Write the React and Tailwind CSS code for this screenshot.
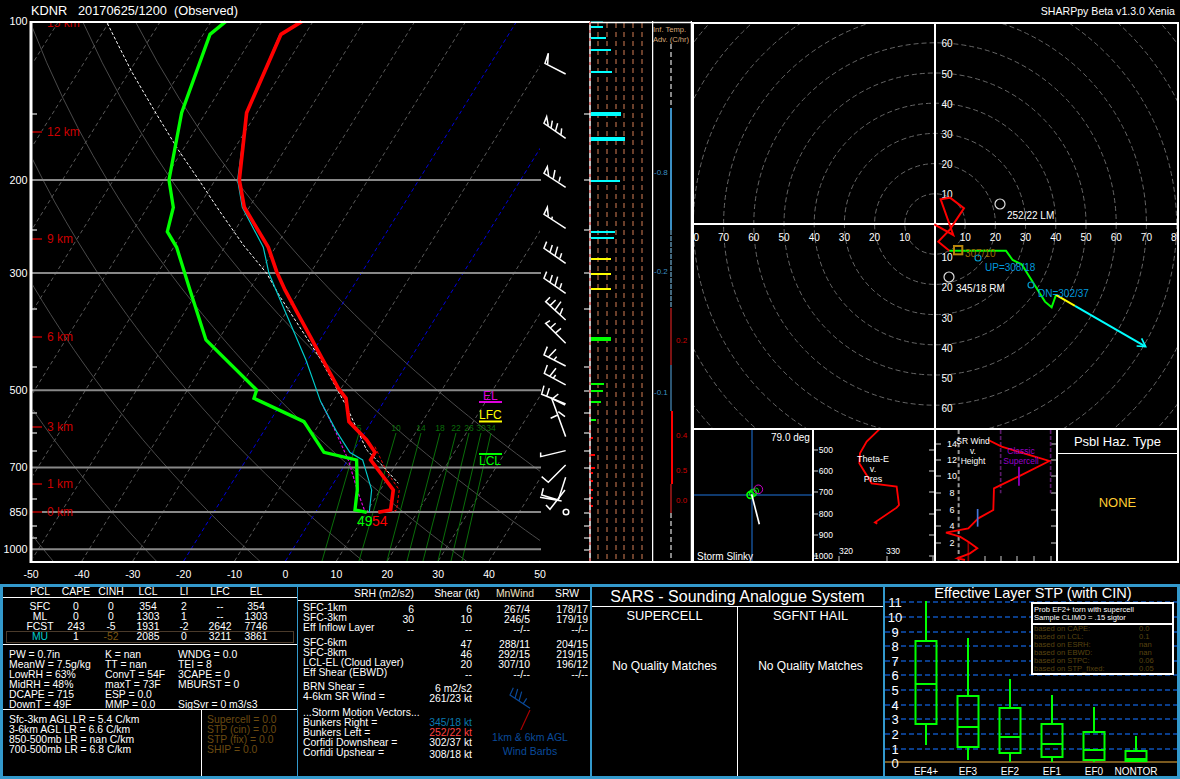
import React from "react";

// page coordinates are kept in the viewBoxes, the z groups use 3x crop coordinates
const yOfP = (p) => 21 + 229.4 * Math.log(p / 100);
const xOfT = (t, y) => 31 + (t + 50) * 5.09 + (561 - y) * 0.617;

const T = ({ x, y, size = 10.4, fill = "#fff", anchor = "start", children }) => (
  <text x={x} y={y} fontSize={size} fill={fill} textAnchor={anchor} dominantBaseline="central">
    {children}
  </text>
);

const Line = ({ pts, stroke, w = 3, dash }) => (
  <polyline points={pts} fill="none" stroke={stroke} strokeWidth={w} strokeDasharray={dash} strokeLinejoin="miter" />
);

const adiabat = (theta) => {
  const out = [];
  for (let p = 100; p <= 1060; p += 20) {
    const y = yOfP(p);
    const t = (theta + 273.15) * Math.pow(p / 1000, 0.286) - 273.15;
    out.push(`${xOfT(t, y).toFixed(1)},${y.toFixed(1)}`);
  }
  return out.join(" ");
};

const pressures = [100, 200, 300, 500, 700, 850, 1000];
const smallTicks = [114, 230, 309, 367, 413, 433, 451, 499, 526, 538];
const heights = [
  ["12 km", 132],
  ["9 km", 239],
  ["6 km", 337],
  ["3 km", 427],
  ["1 km", 484],
  ["0 km", 512],
];
const mixing = [
  ["5", 322, 359],
  ["10", 359, 396],
  ["14", 387, 421],
  ["18", 407, 440],
  ["22", 423, 456],
  ["26", 438, 469],
  ["30", 451, 481],
  ["34", 462, 491],
];
const kinBars = [
  [22, 603, 1, "#00ffff"],
  [27, 603, 2, "#00ffff"],
  [38, 606, 2, "#00ffff"],
  [50, 611, 2, "#00ffff"],
  [72, 612, 2, "#00ffff"],
  [114, 621, 4, "#00ffff"],
  [139, 625, 4, "#00ffff"],
  [181, 620, 2, "#00ffff"],
  [232, 615, 2, "#00ffff"],
  [238, 614, 2, "#00ffff"],
  [259, 611, 2, "#ffff00"],
  [274, 611, 2, "#ffff00"],
  [289, 611, 2, "#ffff00"],
  [339, 611, 4, "#00ff00"],
  [384, 604, 2, "#00ff00"],
  [391, 603, 2, "#00ff00"],
  [402, 601, 2, "#00ff00"],
  [420, 596, 2, "#00ff00"],
  [438, 593, 2, "#ff0000"],
  [455, 595, 2, "#ff0000"],
  [468, 595, 2, "#ff0000"],
  [473, 593, 2, "#ff0000"],
  [481, 593, 2, "#ff0000"],
  [490, 593, 2, "#ff0000"],
  [498, 593, 2, "#ff0000"],
  [506, 593, 2, "#ff0000"],
  [512, 591, 1, "#ff0000"],
];
const barbs = [
  "557,222 495,190 505,160 503,192",
  "557,415 492,370 500,350 505,378 M513,385 517,362 M527,392 533,370 M543,405 545,385",
  "557,562 492,520 502,500 506,528 M520,535 525,510 M537,545 541,530",
  "557,685 492,643 502,622 505,650 M515,660 517,650",
  "557,790 492,745 500,725 M510,757 517,735 M525,768 533,740 M540,775 545,760",
  "557,880 492,835 500,815 M510,847 517,825 M525,858 533,830 M540,865 545,850",
  "557,960 497,905 510,892 M510,917 527,900 M525,930 543,905 M540,945 548,925",
  "557,1030 497,970 510,962 M510,985 527,970 M525,1000 543,985",
  "557,1098 492,1065 502,1040 M505,1072 528,1048 M522,1080 530,1070",
  "557,1155 493,1120 502,1095 M510,1128 528,1105 M520,1135 527,1125",
  "557,1212 485,1183 492,1157 M500,1190 508,1165 M515,1198 535,1182",
  "557,1310 515,1195 555,1215 M535,1235 555,1250 M533,1245 512,1255",
  "557,1352 482,1370 482,1358",
  "557,1395 505,1447 485,1430",
  "557,1432 535,1500 485,1485 490,1465 M480,1492 545,1503",
  "555,1470 510,1528 498,1515",
];

const SkewT = () => (
  <svg viewBox="0 21 652 563" className="w-[652px] h-[563px] shrink-0 overflow-visible">
    <defs>
      <clipPath id="plot">
        <rect x="33" y="23" width="507" height="538" />
      </clipPath>
    </defs>
    <g clipPath="url(#plot)">
      {Array.from({ length: 11 }, (_, i) => 71 - i * 20).map((th) => (
        <polyline key={th} points={adiabat(th)} fill="none" stroke="#4a4a4a" strokeWidth="1" />
      ))}
      {Array.from({ length: 19 }, (_, i) => -130 + i * 10).map((t) => (
        <line
          key={t}
          x1={xOfT(t, 561)}
          y1="561"
          x2={xOfT(t, 21)}
          y2="21"
          stroke={t === -20 || t === 0 ? "#0000dd" : "#5a5a5a"}
          strokeWidth="1"
          strokeDasharray="4 3"
        />
      ))}
      {mixing.map(([n, a, b]) => (
        <g key={n}>
          <line x1={a} y1="561" x2={b} y2="433" stroke="#0a6e0a" strokeWidth="1" />
          <T x={b} y={428} size={8.500} fill="#0a6e0a" anchor="middle">
            {n}
          </T>
        </g>
      ))}
      <T x={47} y={23} size={12} fill="#cc0000">
        15 km
      </T>
    </g>
    {pressures.slice(1).map((p) => (
      <line key={p} x1="31" y1={yOfP(p)} x2="541" y2={yOfP(p)} stroke="#888" strokeWidth="2" />
    ))}
    {smallTicks.map((y) => (
      <g key={y} stroke="#888" strokeWidth="2">
        <line x1="32" y1={y} x2="37" y2={y} />
        <line x1="584" y1={y} x2="590" y2={y} />
      </g>
    ))}
    {[180, 273, 391, 468, 513, 550].map((y) => (
      <line key={y} x1="584" y1={y} x2="590" y2={y} stroke="#888" strokeWidth="2" />
    ))}
    {heights.map(([label, y]) => (
      <g key={label}>
        <line x1="32" y1={y} x2="42" y2={y} stroke="#8b0000" strokeWidth="2" />
        <T x={47} y={y} size={12} fill="#cc0000">
          {label}
        </T>
      </g>
    ))}
    <g transform="scale(0.3333)">
      <Line pts="322,70 395,215 465,335 535,450 600,545 660,635 730,735 800,820 840,890 960,1075 1040,1220 1100,1350 1150,1400 1195,1450" stroke="#fff" w={3} dash="9 6" />
      <Line pts="1125,1340 1160,1415 1198,1470 1190,1530 1180,1535" stroke="#ee0000" w={3} dash="9 6" />
      <Line pts="965,1210 1000,1280 1045,1380 1075,1480 1095,1535" stroke="#dd00dd" w={3.5} dash="9 5" />
      <Line pts="840,103 740,338 713,540 727,622 790,742 807,820 828,870 918,1080 962,1205 1010,1295 1050,1358 1088,1380 1115,1470 1108,1537" stroke="#00cccc" w={3.5} />
      <Line pts="677,65 630,103 545,338 507,540 520,622 502,695 530,742 570,870 618,1020 770,1170 762,1195 912,1265 972,1357 1070,1380 1072,1470 1065,1530 1100,1537" stroke="#00ff00" w={10} />
      <Line pts="905,65 843,103 740,338 718,540 733,622 805,742 830,815 855,870 1015,1165 1038,1195 1047,1265 1100,1320 1125,1357 1112,1380 1180,1470 1172,1530 1135,1537" stroke="#ff0000" w={11} />
    </g>
    <g transform="translate(380 0) scale(0.3333)">
      {barbs.map((b, i) => (
        <path key={i} d={"M" + b.replaceAll(" M", "M").replaceAll(" ", "L")} fill="none" stroke="#fff" strokeWidth="4.5" />
      ))}
    </g>
    <circle cx="566" cy="512" r="2.8" fill="none" stroke="#fff" strokeWidth="1.5" />
    <T x={357} y={521} size={14} fill="#00ff00">
      49
    </T>
    <T x={372} y={521} size={14} fill="#ff0000">
      54
    </T>
    <T x={483} y={396} size={12} fill="#dd00dd">
      EL
    </T>
    <line x1="479" y1="402" x2="502" y2="402" stroke="#dd00dd" strokeWidth="2" />
    <T x={479} y={415} size={12} fill="#ffff00">
      LFC
    </T>
    <line x1="479" y1="421.500" x2="502" y2="421.500" stroke="#ffff00" strokeWidth="2" />
    <line x1="479" y1="454" x2="502" y2="454" stroke="#00ff00" strokeWidth="2" />
    <T x={479} y={461} size={12} fill="#00ff00">
      LCL
    </T>
    {pressures.map((p) => (
      <T key={p} x={27.500} y={yOfP(p)} anchor="end" size={10.800}>
        {p}
      </T>
    ))}
    {[-50, -40, -30, -20, -10, 0, 10, 20, 30, 40, 50].map((t) => (
      <T key={t} x={31 + (t + 50) * 5.09} y={574} anchor="middle" size={10.500}>
        {t}
      </T>
    ))}
    {[598, 607, 616, 624, 633, 642].map((x) => (
      <line key={x} x1={x} y1="23" x2={x} y2="562" stroke="#6a3f2a" strokeWidth="2" strokeDasharray="5 4" />
    ))}
    {kinBars.map(([y, x2, h, c], i) => (
      <rect key={i} x="591" y={y - h / 2} width={x2 - 591} height={h} fill={c} />
    ))}
    <line x1="31" y1="21" x2="31" y2="563" stroke="#fff" strokeWidth="3" />
    <line x1="30" y1="22" x2="590" y2="22" stroke="#fff" strokeWidth="2" />
    <line x1="590" y1="22.500" x2="652" y2="22.500" stroke="#fff" strokeWidth="1.500" />
    <line x1="30" y1="562" x2="652" y2="562" stroke="#fff" strokeWidth="2" />
    <line x1="590" y1="22" x2="590" y2="562" stroke="#fff" strokeWidth="1.5" />
    <line x1="590" y1="22" x2="590" y2="562" stroke="#d05050" strokeWidth="1.5" strokeDasharray="3 5" />
  </svg>
);

const InfTemp = () => (
  <svg viewBox="652 21 40 563" className="w-[40px] h-[563px] shrink-0">
    <line x1="671" y1="44" x2="671" y2="108" stroke="#888" strokeWidth="2" strokeDasharray="5 3" />
    <line x1="671" y1="108" x2="671" y2="230" stroke="#3b8fc4" strokeWidth="2" />
    <line x1="671" y1="230" x2="671" y2="308" stroke="#5a8aa8" strokeWidth="1.5" strokeDasharray="5 1" />
    <line x1="671" y1="308" x2="671" y2="365" stroke="#d02020" strokeWidth="1.2" />
    <line x1="671" y1="365" x2="671" y2="411" stroke="#4a8fc0" strokeWidth="1.2" />
    <line x1="672" y1="411" x2="672" y2="484" stroke="#ff0000" strokeWidth="2" />
    <line x1="671" y1="484" x2="671" y2="513" stroke="#d02020" strokeWidth="1.2" />
    <line x1="671" y1="513" x2="671" y2="562" stroke="#888" strokeWidth="2" strokeDasharray="5 3" />
    <T x={653} y={29} size={7.600} fill="#d8a878">
      Inf. Temp.
    </T>
    <T x={653} y={39} size={7.600} fill="#d8a878">
      Adv. (C/hr)
    </T>
    {[
      ["-0.8", 172],
      ["-0.2", 271],
      ["-0.1", 392],
    ].map(([l, y]) => (
      <T key={l} x={654} y={y} size={8} fill="#3b8fc4">
        {l}
      </T>
    ))}
    {[
      ["0.2", 340],
      ["0.4", 435],
      ["0.5", 470],
      ["0.0", 500],
    ].map(([l, y]) => (
      <T key={l} x={676} y={y} size={8} fill="#cc0000">
        {l}
      </T>
    ))}
    <line x1="652" y1="21" x2="652" y2="563" stroke="#fff" strokeWidth="2.500" />
    <line x1="652" y1="22.500" x2="692" y2="22.500" stroke="#fff" strokeWidth="1.500" />
    <line x1="652" y1="562" x2="692" y2="562" stroke="#fff" strokeWidth="2" />
    <line x1="691.500" y1="21" x2="691.500" y2="563" stroke="#fff" strokeWidth="1.500" />
  </svg>
);

const hodoCx = 935;
const hodoCy = 224;
const ring = 30.2;

const Hodograph = () => (
  <svg viewBox="694 24 483 404" className="w-[483px] h-[404px]">
    {Array.from({ length: 14 }, (_, i) => i + 1).map((k) => (
      <circle key={k} cx={hodoCx} cy={hodoCy} r={k * ring} fill="none" stroke="#666" strokeWidth="1" strokeDasharray="5 3" />
    ))}
    <line x1={hodoCx} y1="24" x2={hodoCx} y2="428" stroke="#fff" strokeWidth="2" />
    <line x1="694" y1={hodoCy} x2="1177" y2={hodoCy} stroke="#fff" strokeWidth="2" />
    {[1, 2, 3, 4, 5, 6, 7, 8].map((k) => (
      <g key={k}>
        <T x={hodoCx - k * ring} y={237} size={10} anchor="middle">
          {k * 10}
        </T>
        <T x={hodoCx + k * ring} y={237} size={10} anchor="middle">
          {k * 10}
        </T>
      </g>
    ))}
    {[1, 2, 3, 4, 5, 6].map((k) => (
      <g key={k}>
        <T x={947} y={hodoCy - k * ring + 1} size={10} anchor="middle">
          {k * 10}
        </T>
        <T x={947} y={hodoCy + k * ring + 3.500} size={10} anchor="middle">
          {k * 10}
        </T>
      </g>
    ))}
    <g transform="translate(690 160) scale(0.3333)">
      <Line pts="778,272 745,245 780,208 822,145 780,113 752,118 790,225 733,193" stroke="#ff0000" w={6} />
      <Line pts="778,272 948,272 968,300 995,313 1040,385 1065,425 1085,442 1098,405" stroke="#00ff00" w={6} />
      <Line pts="1098,405 1155,438" stroke="#ffff00" w={6} />
      <Line pts="1155,438 1367,560" stroke="#00ffff" w={6} />
      <Line pts="1355,535 1367,560 1340,558" stroke="#00ffff" w={5} />
      <rect x="792" y="258" width="25" height="25" fill="none" stroke="#b8860b" strokeWidth="6" />
    </g>
    <T x={965} y={253} size={10} fill="#9a6a00">
      307/10
    </T>
    <circle cx="978" cy="258" r="3" fill="none" stroke="#0099cc" strokeWidth="1.200" />
    <T x={985} y={267} size={10} fill="#0099dd">
      UP=308/18
    </T>
    <circle cx="1031" cy="285" r="3" fill="none" stroke="#0099cc" strokeWidth="1.200" />
    <T x={1038} y={293} size={10} fill="#0099dd">
      DN=302/37
    </T>
    <circle cx="1000" cy="204" r="5" fill="none" stroke="#ddd" strokeWidth="1.200" />
    <T x={1007} y={215} size={10}>
      252/22 LM
    </T>
    <circle cx="949" cy="277" r="5" fill="none" stroke="#ddd" strokeWidth="1.200" />
    <T x={956} y={288} size={10}>
      345/18 RM
    </T>
  </svg>
);

const Slinky = () => (
  <svg viewBox="694 430 118 131" className="w-[118px] h-[131px]">
    <line x1="752" y1="430" x2="752" y2="561" stroke="#0f3a6e" strokeWidth="2" />
    <line x1="694" y1="495" x2="812" y2="495" stroke="#0f3a6e" strokeWidth="2" />
    <g transform="translate(690 425) scale(0.3333)" fill="none">
      <circle cx="181" cy="210" r="10" stroke="#00ff00" strokeWidth="5" />
      <circle cx="189" cy="204" r="10" stroke="#00ff00" strokeWidth="4" />
      <circle cx="197" cy="198" r="9" stroke="#00cc00" strokeWidth="3" />
      <circle cx="205" cy="193" r="13" stroke="#cc00cc" strokeWidth="3" />
      <line x1="185" y1="208" x2="208" y2="298" stroke="#fff" strokeWidth="5" />
    </g>
    <T x={771} y={437} size={10}>
      79.0 deg
    </T>
    <T x={697} y={556} size={10}>
      Storm Slinky
    </T>
  </svg>
);

const ThetaE = () => (
  <svg viewBox="814 430 120 131" className="w-[120px] h-[131px]">
    {[
      [500, 450],
      [600, 471],
      [700, 492],
      [800, 514],
      [900, 535],
      [1000, 556],
    ].map(([p, y]) => (
      <g key={p}>
        <line x1="814" y1={y} x2="818" y2={y} stroke="#888" strokeWidth="1.500" />
        <line x1="929" y1={y} x2="934" y2={y} stroke="#888" strokeWidth="1.500" />
        <T x={833} y={y} size={8.500} anchor="end">
          {p}
        </T>
      </g>
    ))}
    {[839, 887, 933].map((x) => (
      <line key={x} x1={x} y1="556" x2={x} y2="561" stroke="#888" strokeWidth="1.500" />
    ))}
    <T x={846} y={551} size={8.500} anchor="middle">
      320
    </T>
    <T x={893} y={551} size={8.500} anchor="middle">
      330
    </T>
    <g transform="translate(690 425) scale(0.3333)">
      <Line pts="568,13 530,50 510,85 508,115 545,175 620,185 627,240 620,248 555,292 562,296" stroke="#ff0000" w={5.500} />
    </g>
    <T x={873} y={459} size={9} anchor="middle">
      Theta-E
    </T>
    <T x={873} y={469} size={9} anchor="middle">
      v.
    </T>
    <T x={873} y={479} size={9} anchor="middle">
      Pres
    </T>
  </svg>
);

const SrWind = () => (
  <svg viewBox="936 430 120 131" className="w-[120px] h-[131px]">
    {[
      [14, 444],
      [12, 460],
      [10, 476],
      [8, 493],
      [6, 510],
      [4, 526],
      [2, 543],
    ].map(([h, y]) => (
      <g key={h}>
        <line x1="936" y1={y} x2="941" y2={y} stroke="#888" strokeWidth="1.500" />
        <line x1="1051" y1={y} x2="1056" y2={y} stroke="#888" strokeWidth="1.500" />
        <T x={952} y={y} size={9} anchor="middle">
          {h}
        </T>
      </g>
    ))}
    {[985, 1001, 1017, 1034, 1051].map((x) => (
      <line key={x} x1={x} y1="556" x2={x} y2="561" stroke="#888" strokeWidth="1.500" />
    ))}
    <g transform="translate(690 425) scale(0.3333)">
      <line x1="806" y1="15" x2="806" y2="408" stroke="#999" strokeWidth="6" strokeDasharray="12 8" />
      <line x1="932" y1="15" x2="932" y2="205" stroke="#5a1a6a" strokeWidth="5" strokeDasharray="12 6" />
      <line x1="1082" y1="15" x2="1082" y2="205" stroke="#5a1a6a" strokeWidth="5" strokeDasharray="12 6" />
      <line x1="835" y1="350" x2="835" y2="408" stroke="#990000" strokeWidth="5" />
      <Line pts="895,45 935,65 1078,108 985,155 912,190 910,255 865,280 835,310 768,323 810,335 835,350 862,370 840,385 802,400 825,405" stroke="#ff0000" w={5.500} />
      <line x1="987" y1="125" x2="987" y2="182" stroke="#9900cc" strokeWidth="5" />
      <line x1="863" y1="252" x2="863" y2="305" stroke="#4477dd" strokeWidth="5" />
    </g>
    <T x={973} y={441} size={8.500} anchor="middle">
      SR Wind
    </T>
    <T x={973} y={451} size={8.500} anchor="middle">
      v.
    </T>
    <T x={973} y={461} size={8.500} anchor="middle">
      Height
    </T>
    <T x={1021} y={451} size={8.500} fill="#9900cc" anchor="middle">
      Classic
    </T>
    <T x={1021} y={461} size={8.500} fill="#9900cc" anchor="middle">
      Supercell
    </T>
  </svg>
);

const parcelRows = [
  ["SFC", "0", "0", "354", "2", "--", "354"],
  ["ML", "0", "0", "1303", "1", "--", "1303"],
  ["FCST", "243", "-5", "1931", "-2", "2642", "7746"],
];
const indexRows = [
  "PW = 0.7in", "K = nan", "WNDG = 0.0",
  "MeanW = 7.5g/kg", "TT = nan", "TEI = 8",
  "LowRH = 63%", "ConvT = 54F", "3CAPE = 0",
  "MidRH = 48%", "maxT = 73F", "MBURST = 0",
  "DCAPE = 715", "ESP = 0.0", "",
  "DownT = 49F", "MMP = 0.0", "SigSvr = 0 m3/s3",
];

const ParcelPanel = () => (
  <div className="w-[295px] shrink-0 flex flex-col border-r border-[#3399cc]">
    <div className="h-[11px] border-b border-white grid grid-cols-[36px_36px_34px_40px_32px_40px_32px] pl-[19px] text-center">
      {["PCL", "CAPE", "CINH", "LCL", "LI", "LFC", "EL"].map((h) => (
        <div key={h} className="h-[10px]">{h}</div>
      ))}
    </div>
    <div className="h-[47px] border-b border-white pt-[4px]">
      {parcelRows.map((r) => (
        <div key={r[0]} className="h-[10px] grid grid-cols-[36px_36px_34px_40px_32px_40px_32px] pl-[19px] text-center">
          {r.map((c, i) => (
            <div key={i}>{c}</div>
          ))}
        </div>
      ))}
      <div className="h-[12px] mx-[3px] border border-[#4a3a2a] grid grid-cols-[36px_36px_34px_40px_32px_40px_32px] pl-[15px] text-center -mt-[1px]">
        <div className="text-[#00cccc]">MU</div>
        <div>1</div>
        <div className="text-[#7a5510]">-52</div>
        <div>2085</div>
        <div>0</div>
        <div>3211</div>
        <div>3861</div>
      </div>
    </div>
    <div className="h-[65px] border-b border-white pt-[5px] pl-[6px] grid grid-cols-[96px_73px_1fr] auto-rows-[10px]">
      {indexRows.map((t, i) => (
        <div key={i} className="whitespace-nowrap">{t}</div>
      ))}
    </div>
    <div className="flex flex-1">
      <div className="w-[199px] border-r border-white pl-[6px] pt-[5px]">
        <div className="h-[10px]">Sfc-3km AGL LR = 5.4 C/km</div>
        <div className="h-[10px]">3-6km AGL LR = 6.6 C/km</div>
        <div className="h-[10px]">850-500mb LR = nan C/km</div>
        <div className="h-[10px]">700-500mb LR = 6.8 C/km</div>
      </div>
      <div className="pl-[5px] pt-[5px] text-[#6b4a10]">
        <div className="h-[10px]">Supercell = 0.0</div>
        <div className="h-[10px]">STP (cin) = 0.0</div>
        <div className="h-[10px]">STP (fix) = 0.0</div>
        <div className="h-[10px]">SHIP = 0.0</div>
      </div>
    </div>
  </div>
);

const KinRow = ({ label, v = [] }) => (
  <div className="h-[10px] flex">
    <div className="w-[111px] flex justify-between whitespace-nowrap">
      <span>{label}</span>
      <span className="pt-[2px]">{v[0]}</span>
    </div>
    {[1, 2, 3].map((i) => (
      <div key={i} className="w-[58px] pt-[2px] text-right">{v[i]}</div>
    ))}
  </div>
);

const MotionRow = ({ label, value, color = "", drop = "pt-0" }) => (
  <div className="h-[10px] flex justify-between w-[169px] whitespace-nowrap">
    <span>{label}</span>
    <span className={`${color} ${drop}`}>{value}</span>
  </div>
);

const KinematicsPanel = () => (
  <div className="w-[294px] shrink-0 flex flex-col border-r-2 border-[#3399cc]">
    <div className="h-[14px] border-b border-white pt-[2px] flex text-center whitespace-nowrap">
      <div className="w-[130px] pl-[42px]">SRH (m2/s2)</div>
      <div className="w-[58px]">Shear (kt)</div>
      <div className="w-[58px] text-[#f0e0c0]">MnWind</div>
      <div className="w-[46px]">SRW</div>
    </div>
    <div className="pl-[5px] pt-[2px]">
      <KinRow label="SFC-1km" v={["6", "6", "267/4", "178/17"]} />
      <KinRow label="SFC-3km" v={["30", "10", "246/5", "179/19"]} />
      <KinRow label="Eff Inflow Layer" v={["--", "--", "--/--", "--/--"]} />
      <div className="h-[5px]" />
      <KinRow label="SFC-6km" v={["", "47", "288/11", "204/15"]} />
      <KinRow label="SFC-8km" v={["", "46", "292/15", "219/15"]} />
      <KinRow label="LCL-EL (Cloud Layer)" v={["", "20", "307/10", "196/12"]} />
      <KinRow label="Eff Shear (EBWD)" v={["", "--", "--/--", "--/--"]} />
      <div className="h-[4px]" />
      <div className="flex">
        <div className="w-[174px]">
          <MotionRow label="BRN Shear =" value="6 m2/s2" drop="pt-[2px]" />
          <MotionRow label="4-6km SR Wind =" value="261/23 kt" drop="pt-[2px]" />
          <div className="h-[6px]" />
          <div className="h-[10px] whitespace-nowrap">...Storm Motion Vectors...</div>
          <MotionRow label="Bunkers Right =" value="345/18 kt" color="text-[#0a7ab0]" />
          <MotionRow label="Bunkers Left =" value="252/22 kt" color="text-[#ff4040]" />
          <MotionRow label="Corfidi Downshear =" value="302/37 kt" />
          <MotionRow label="Corfidi Upshear =" value="308/18 kt" drop="pt-[2px]" />
        </div>
        <div className="w-[106px] pt-[3px] flex flex-col items-center text-[#0a4a9a] text-[10.500px]">
          <svg viewBox="630 310 150 135" className="w-[50px] h-[45px]">
            <path d="M705 380L645 340L655 318M660 350L668 322M672 358L680 330M685 366L695 350" fill="none" stroke="#0a4a9a" strokeWidth="3.500" />
            <path d="M705 385L675 450L660 447" fill="none" stroke="#aa0000" strokeWidth="3.500" />
          </svg>
          <div className="h-[14px] leading-[14px] whitespace-nowrap">1km & 6km AGL</div>
          <div className="h-[14px] leading-[14px] whitespace-nowrap">Wind Barbs</div>
        </div>
      </div>
    </div>
  </div>
);

const SarsColumn = ({ title, border }) => (
  <div className={`flex-1 text-center text-[12px] ${border}`}>
    <div className="h-[17px] leading-[17px] text-[12.800px]">{title}</div>
    <div className="mt-[35px] h-[14px] leading-[14px]">No Quality Matches</div>
  </div>
);

const SarsPanel = () => (
  <div className="w-[293px] shrink-0 flex flex-col border-r-2 border-[#3399cc]">
    <div className="h-[20px] leading-[19px] border-b border-white text-center text-[16px] whitespace-nowrap">SARS - Sounding Analogue System</div>
    <div className="flex flex-1">
      <SarsColumn title="SUPERCELL" border="border-r border-white" />
      <SarsColumn title="SGFNT HAIL" border="" />
    </div>
  </div>
);

const stpBoxes = [
  ["EF4+", 926, 601, 745, 641, 724, 684],
  ["EF3", 968, 638, 760, 696, 747, 727],
  ["EF2", 1010, 679, 762, 708, 753, 737],
  ["EF1", 1052, 695, 762, 724, 757, 744],
  ["EF0", 1094, 707, 762, 732, 760, 750],
  ["NONTOR", 1136, 736, 762, 751, 761, 759],
];
const stpAxis = [602, 617, 632, 646, 661, 675, 690, 705, 719, 734, 749, 763];
const probRows = [
  ["based on CAPE:", "0.0"],
  ["based on LCL:", "0.1"],
  ["based on ESRH:", "nan"],
  ["based on EBWD:", "nan"],
  ["based on STPC:", "0.06"],
  ["based on STP_fixed:", "0.05"],
];

const StpPanel = () => (
  <div className="flex-1 flex flex-col">
    <div className="h-[13px] leading-[13px] text-center text-[14.600px] whitespace-nowrap pl-[4px]">Effective Layer STP (with CIN)</div>
    <div className="relative flex-1">
      <svg viewBox="885 600 292 176" className="w-[292px] h-[176px] overflow-visible">
        {stpAxis.slice(0, 11).map((y) => (
          <line key={y} x1="885" y1={y} x2="1177" y2={y} stroke="#0a3d8a" strokeWidth="2" strokeDasharray="5 3" />
        ))}
        <line x1="885" y1="762" x2="1177" y2="762" stroke="#7a5a20" strokeWidth="2" />
        {stpAxis.map((y, i) => (
          <T key={y} x={895} y={y} size={13} anchor="middle">
            {11 - i}
          </T>
        ))}
        {stpBoxes.map(([label, x, w1, w2, top, bottom, med]) => (
          <g key={label} stroke="#00ff00" strokeWidth="2" fill="none">
            <line x1={x} y1={w1} x2={x} y2={top} />
            <line x1={x} y1={bottom} x2={x} y2={w2} />
            <rect x={x - 10.500} y={top} width="21" height={bottom - top} />
            <line x1={x - 10.500} y1={med} x2={x + 10.500} y2={med} />
          </g>
        ))}
        {stpBoxes.map(([label, x]) => (
          <T key={label} x={x} y={771} size={10} anchor="middle">
            {label}
          </T>
        ))}
      </svg>
      <div className="absolute left-[146px] top-[2px] w-[143px] h-[73px] border-2 border-white bg-black text-[7.600px] leading-[8px] flex flex-col">
        <div className="h-[21px] border-b-2 border-white pl-[1px] pt-[2px] whitespace-nowrap">
          <div>Prob EF2+ torn with supercell</div>
          <div>Sample CLIMO = .15 sigtor</div>
        </div>
        <div className="pl-[1px] text-[#5a4510]">
          {probRows.map(([a, b]) => (
            <div key={a} className="h-[8px] flex">
              <div className="w-[105px]">{a}</div>
              <div>{b}</div>
            </div>
          ))}
        </div>
      </div>
    </div>
  </div>
);

export default function App() {
  return (
    <div className="w-[1180px] h-[779px] bg-black text-white overflow-hidden flex flex-col font-['Liberation_Sans',sans-serif] text-[10.400px] leading-[10px]">
      <div className="h-[21px] flex justify-between items-center">
        <div className="pl-[31px] text-[12.800px] whitespace-pre">KDNR   20170625/1200  (Observed)</div>
        <div className="pr-[5px] text-[10.600px]">SHARPpy Beta v1.3.0 Xenia</div>
      </div>
      <div className="h-[563px] flex">
        <SkewT />
        <InfTemp />
        <div className="w-[487px] pt-[1px] flex flex-col">
          <div className="h-[408px] border-2 border-white">
            <Hodograph />
          </div>
          <div className="h-[133px] flex border-x-2 border-b-2 border-white">
            <div className="w-[120px] border-r-2 border-white">
              <Slinky />
            </div>
            <div className="w-[122px] border-r-2 border-white">
              <ThetaE />
            </div>
            <div className="w-[122px] border-r-2 border-white">
              <SrWind />
            </div>
            <div className="flex-1 flex flex-col">
              <div className="h-[24px] leading-[23px] border-b border-white text-center text-[13px]">Psbl Haz. Type</div>
              <div className="flex-1 flex items-center justify-center text-[13px] text-[#ffcc33] pb-[10px]">NONE</div>
            </div>
          </div>
        </div>
      </div>
      <div className="h-[195px] flex border-[3px] border-[#3399cc]">
        <ParcelPanel />
        <KinematicsPanel />
        <SarsPanel />
        <StpPanel />
      </div>
    </div>
  );
}
